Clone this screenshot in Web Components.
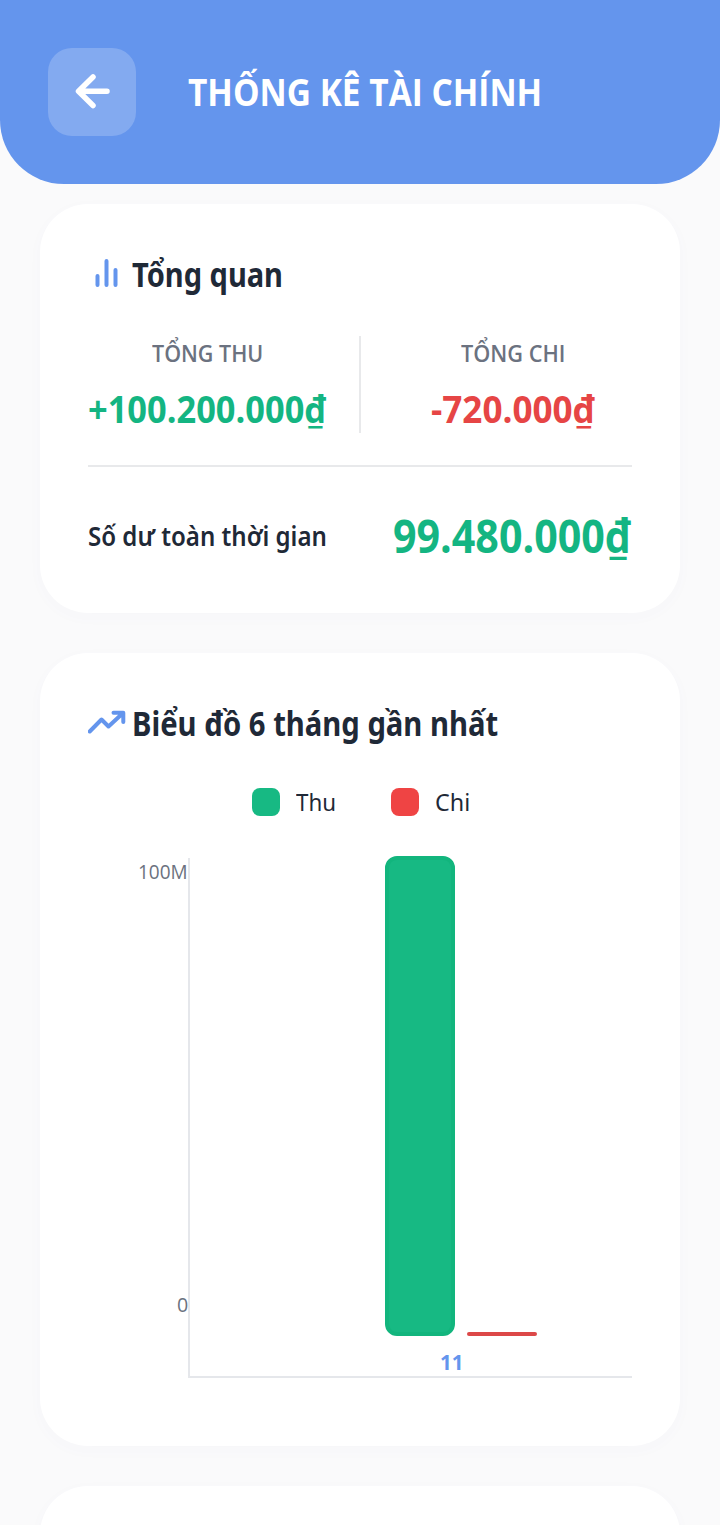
<!DOCTYPE html>
<html lang="vi">
<head>
<meta charset="utf-8">
<title>Thống kê tài chính</title>
<style>
html, body { margin: 0; background: #fafafb; }
body { height: 1525px; overflow: hidden; font-family: "Noto Sans", "Open Sans", sans-serif; color: #1f2937; }
</style>
</head>
<body>
<finance-screen></finance-screen>
<script>
function define(name, html, setup) {
  const t = document.createElement('template');
  t.innerHTML = html;
  customElements.define(name, class extends HTMLElement {
    constructor() {
      super();
      this.attachShadow({ mode: 'open' }).appendChild(t.content.cloneNode(true));
    }
    connectedCallback() { if (setup) setup(this, this.shadowRoot); }
  });
}

/* A line of text condensed to a given width. */
define('fit-text', `
  <style>
    :host { display: block; flex: none; white-space: nowrap; }
    span { display: inline-block; transform-origin: 0 50%; vertical-align: top; }
  </style>
  <span><slot></slot></span>`, (el, root) => {
  const w = +el.getAttribute('w'), span = root.querySelector('span');
  el.style.width = w + 'px';
  span.style.transform = 'scaleX(' + w / span.offsetWidth + ')';
});

define('app-header', `
  <style>
    :host { display: flex; align-items: flex-start; box-sizing: border-box; height: 184px; padding: 48px;
      background: #6495ed; border-radius: 0 0 64px 64px; color: #fff; }
    button { all: unset; display: block; width: 88px; height: 88px; border-radius: 24px; background: rgba(255,255,255,.2); }
    svg { display: block; }
    fit-text { margin-left: 52px; font-family: "Open Sans", sans-serif; font-size: 37.5px; font-weight: 700; line-height: 88px; }
  </style>
  <button aria-label="Quay lại"><svg width="88" height="88" fill="none" stroke="#fff" stroke-width="5.5" stroke-linecap="round" stroke-linejoin="round"><path d="M45 29 30.5 43.300 45 57.500M31 43.300H59"/></svg></button>
  <fit-text w="354"><slot></slot></fit-text>`);

define('app-card', `
  <style>
    :host { display: block; box-sizing: border-box; padding: 48px; border-radius: 48px; background: #fff;
      box-shadow: 0 4px 16px rgba(80,80,160,.025); }
  </style>
  <slot></slot>`);

define('card-title', `
  <style>
    :host { display: flex; align-items: center; height: 44px; gap: 4px; font-size: 34px; font-weight: 700; line-height: 44px; color: #1f2937; }
    ::slotted(svg) { display: block; flex: none; width: 40px; height: 40px; }
  </style>
  <slot name="icon"></slot><slot></slot>`);

define('stat-column', `
  <style>
    :host { display: flex; flex-direction: column; align-items: center; gap: 15px; font-family: "Open Sans", sans-serif; }
    .label { font-size: 24px; line-height: 34px; font-weight: 600; color: #6b7280; }
    .value { font-size: 37px; line-height: 48px; font-weight: 700; }
  </style>
  <div class="label"><slot name="label"></slot></div>
  <div class="value"><slot></slot></div>`);

define('overview-stats', `
  <style>
    :host { display: grid; grid-template-columns: 239px 2px 239px; gap: 32px; height: 96px; margin-top: 40px; font-family: "Open Sans", sans-serif; }
    i { background: #e8e9eb; }
    .in { color: #14b582; } .out { color: #e64545; }
  </style>
  <stat-column class="in"><fit-text slot="label" w="111">TỔNG THU</fit-text><fit-text w="239">+100.200.000₫</fit-text></stat-column>
  <i></i>
  <stat-column class="out"><fit-text slot="label" w="104">TỔNG CHI</fit-text><fit-text w="164">-720.000₫</fit-text></stat-column>`);

define('balance-row', `
  <style>
    :host { display: flex; justify-content: space-between; align-items: center; margin-top: 33px; padding-top: 38px;
      border-top: 2px solid #e8e9eb; line-height: 60px; }
    .label { font-size: 27.5px; font-weight: 650; line-height: 58px; padding-top: 2px; }
    .value { font-family: "Open Sans", sans-serif; font-size: 46px; font-weight: 700; color: #14b582; }
  </style>
  <fit-text class="label" w="239">Số dư toàn thời gian</fit-text>
  <fit-text class="value" w="239">99.480.000₫</fit-text>`);

define('chart-legend', `
  <style>
    :host { display: flex; margin: 43px 0 0 164px; height: 28px; line-height: 28px; font-size: 24px; }
    i { width: 28px; height: 28px; border-radius: 8px; background: #17b983; margin-right: 16px; }
    i.out { background: #ef4444; margin-left: 55px; }
  </style>
  <i></i><fit-text w="40">Thu</fit-text><i class="out"></i><fit-text w="35">Chi</fit-text>`);

define('bar-chart', `
  <style>
    :host { display: grid; grid-template-columns: 100px 444px; height: 522px; margin: 40px 0 20px; font-family: "Open Sans", sans-serif; }
    .axis { display: flex; flex-direction: column; justify-content: space-between; align-items: flex-end;
      box-sizing: border-box; padding-bottom: 59px; font-size: 20.5px; line-height: 30px; color: #6b7280; }
    .plot { box-sizing: border-box; margin-top: 2px; border-left: 2px solid #e5e7eb; border-bottom: 2px solid #e5e7eb; }
    .bars { display: flex; align-items: flex-end; gap: 12px; height: 480px; margin: -2px 0 0 195px; }
    .in { box-sizing: border-box; width: 70px; height: 480px; border-radius: 12px; background: #17b983; border: 4px solid #12b57d; }
    .out { width: 70px; height: 4px; border-radius: 2px; background: #dc4848; }
    .month { margin: 12px 0 0 250px; font-size: 20.5px; line-height: 28px; font-weight: 700; color: #6495ed; }
  </style>
  <div class="axis"><fit-text w="50">100M</fit-text><fit-text w="11.5">0</fit-text></div>
  <div class="plot">
    <div class="bars"><div class="in"></div><div class="out"></div></div>
    <fit-text class="month" w="23">11</fit-text>
  </div>`);

define('finance-screen', `
  <style>
    :host { display: block; width: 720px; height: 1525px; overflow: hidden; }
    main { display: flex; flex-direction: column; gap: 40px; padding: 20px 40px 0; }
    svg { fill: none; stroke: #6495ed; stroke-width: 4; stroke-linecap: round; stroke-linejoin: round; }
    .next { height: 240px; }
  </style>
  <app-header>THỐNG KÊ TÀI CHÍNH</app-header>
  <main>
    <app-card>
      <card-title>
        <svg slot="icon" viewBox="0 0 40 40"><path d="M9.500 22V31M18.500 7V31M27.500 16V31"/></svg>
        <fit-text w="151">Tổng quan</fit-text>
      </card-title>
      <overview-stats></overview-stats>
      <balance-row></balance-row>
    </app-card>
    <app-card>
      <card-title>
        <svg slot="icon" viewBox="0 0 40 40"><path d="M1.700 28.500 13.500 16.500 20.500 23.500 34.500 10.500M25.500 9.700H35.300V19"/></svg>
        <fit-text w="366">Biểu đồ 6 tháng gần nhất</fit-text>
      </card-title>
      <chart-legend></chart-legend>
      <bar-chart></bar-chart>
    </app-card>
    <app-card class="next"></app-card>
  </main>`);
</script>
</body>
</html>
